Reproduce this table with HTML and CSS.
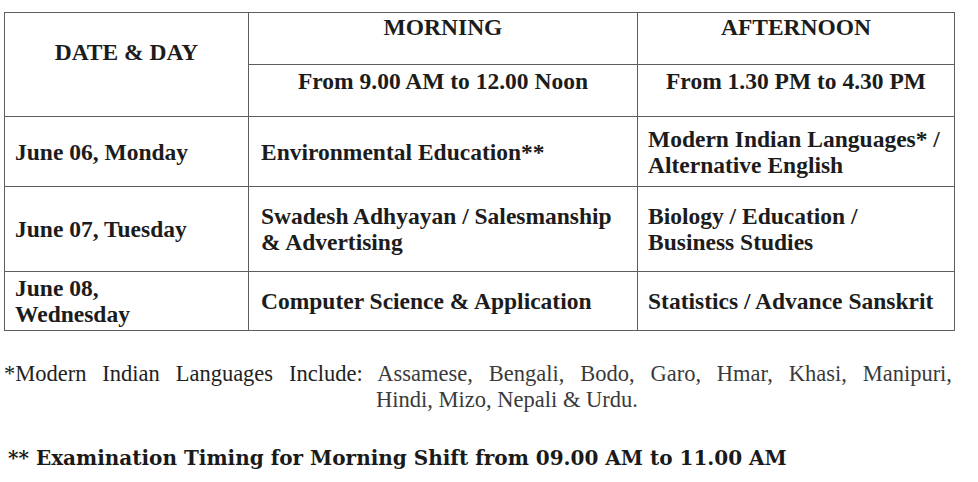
FILE: index.html
```html
<!DOCTYPE html>
<html>
<head>
<meta charset="utf-8">
<link rel="stylesheet" href="styles.css">
</head>
<body>
<div class="page">
  <table class="schedule">
    <colgroup>
      <col class="c1"><col class="c2"><col class="c3">
    </colgroup>
    <tr class="h1">
      <th rowspan="2" class="hdate">DATE &amp; DAY</th>
      <th class="hshift">MORNING</th>
      <th class="hshift">AFTERNOON</th>
    </tr>
    <tr class="h2">
      <th class="htime">From 9.00 AM to 12.00 Noon</th>
      <th class="htime">From 1.30 PM to 4.30 PM</th>
    </tr>
    <tr class="r1">
      <td class="date">June 06, Monday</td>
      <td class="subj">Environmental Education**</td>
      <td class="subj3">Modern Indian Languages* /<br>Alternative English</td>
    </tr>
    <tr class="r2">
      <td class="date">June 07, Tuesday</td>
      <td class="subj">Swadesh Adhyayan / Salesmanship<br>&amp; Advertising</td>
      <td class="subj3">Biology / Education /<br>Business Studies</td>
    </tr>
    <tr class="r3">
      <td class="date">June 08,<br>Wednesday</td>
      <td class="subj">Computer Science &amp; Application</td>
      <td class="subj3">Statistics / Advance Sanskrit</td>
    </tr>
  </table>

  <div class="note">
    <p class="note-l1">*Modern Indian Languages Include: <span class="light">Assamese, Bengali, Bodo, Garo, Hmar, Khasi, Manipuri,</span></p>
    <p class="note-l2 light">Hindi, Mizo, Nepali &amp; Urdu.</p>
  </div>

  <p class="timing">** Examination Timing for Morning Shift from 09.00 AM to 11.00 AM</p>
</div>
</body>
</html>
```

FILE: styles.css
```css
html, body {
  margin: 0;
  padding: 0;
  background: #ffffff;
}

.page {
  width: 978px;
  height: 482px;
  padding: 12px 0 0 4px;
  box-sizing: border-box;
  color: #1c1c1c;
}

.schedule {
  border-collapse: collapse;
  width: 950px;
  table-layout: fixed;
  font-family: "Liberation Serif", "Times New Roman", serif;
  font-weight: bold;
  font-size: 23.5px;
  line-height: 26px;
}

.c1 { width: 244px; }
.c2 { width: 389px; }
.c3 { width: 317px; }

.schedule th,
.schedule td {
  border: 1px solid #5e5e5e;
  padding: 0;
}

.h1 { height: 52px; }
.h2 { height: 52px; }
.r1 { height: 70px; }
.r2 { height: 85px; }
.r3 { height: 59px; }

.hdate {
  vertical-align: top;
  padding-top: 26px !important;
  text-align: center;
}

.hshift {
  vertical-align: top;
  padding-top: 1px !important;
  text-align: center;
}

.htime {
  vertical-align: top;
  padding-top: 3px !important;
  text-align: center;
}

.date {
  vertical-align: middle;
  padding-left: 10px !important;
  text-align: left;
}

.subj {
  vertical-align: middle;
  padding-left: 12px !important;
  text-align: left;
}

.subj3 {
  vertical-align: middle;
  padding-left: 10px !important;
  text-align: left;
}

.note {
  margin-top: 30px;
  width: 948px;
  font-family: "Liberation Serif", "Times New Roman", serif;
  font-size: 22.5px;
  line-height: 26px;
  color: #222;
}

.note p {
  margin: 0;
}

.note-l1 {
  text-align: justify;
  text-align-last: justify;
  white-space: nowrap;
}

.note-l2 {
  text-align: center;
  padding-left: 58px;
}

.light {
  color: #3a3a3a;
}

.timing {
  margin: 33px 0 0 4px;
  font-family: "DejaVu Serif", serif;
  font-weight: bold;
  font-size: 20px;
  line-height: 24px;
  color: #1a1a1a;
}
```
